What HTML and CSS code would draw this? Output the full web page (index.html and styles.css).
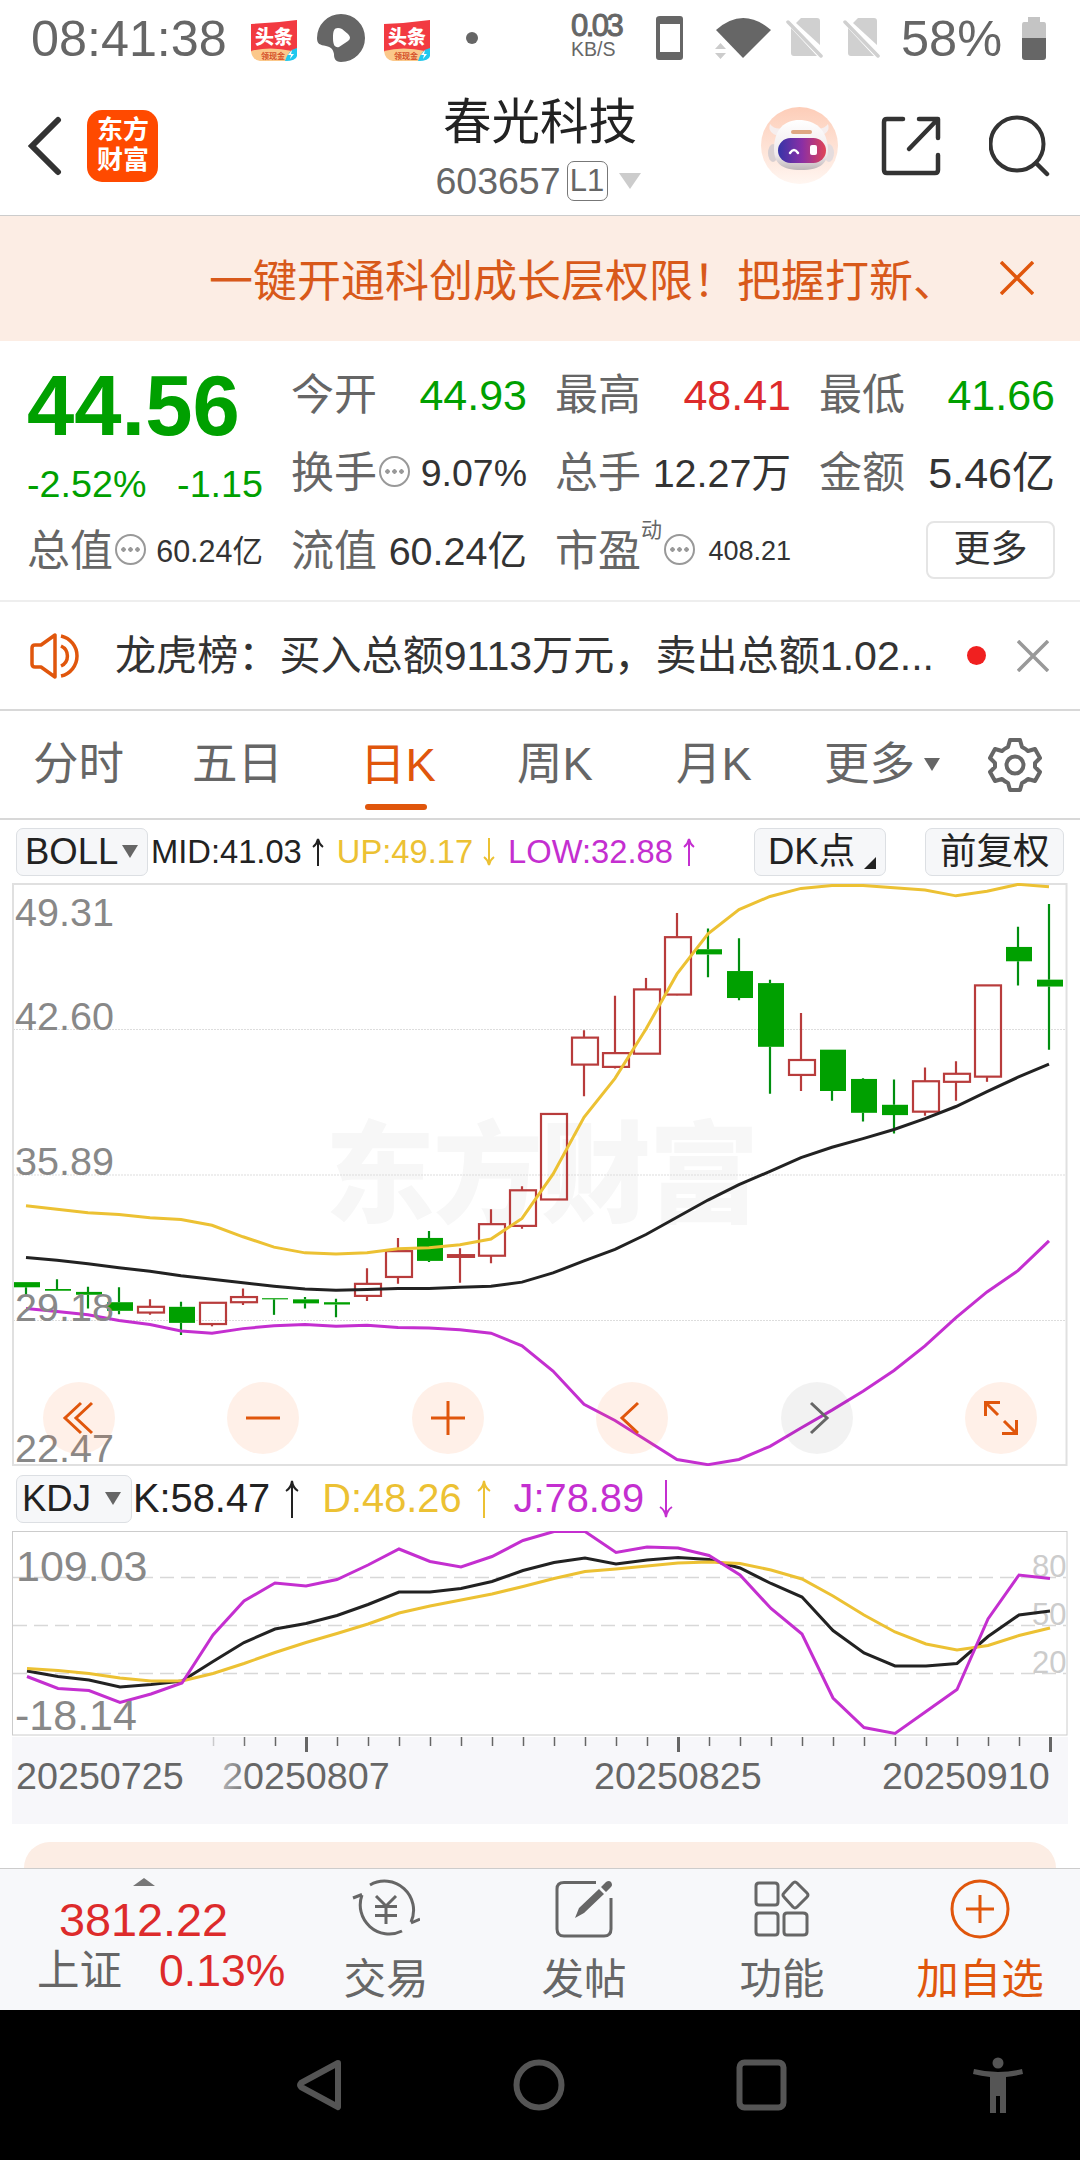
FILE: index.html
```
<!DOCTYPE html>
<html lang="zh-CN">

<head>
  <meta charset="UTF-8">
  <title>春光科技 603657</title>
  <link rel="stylesheet" href="styles.css">
</head>

<body>
  <!-- status bar -->
  <div class="status">
    <span class="time">08:41:38</span>
    <svg class="toutiao" width="48" height="42" viewBox="0 0 48 42">
      <path fill="#f23a41" d="M1 4Q25 3 47 0V32H1z" />
      <path fill="#fbc88a" d="M1 31Q20 26 42 31L38 41H10Q2 40 1 31z" />
      <path fill="#1fc8ee" d="M47 28V36Q46 41 35 41Q38 30 47 28z" />
      <path fill="#fff" d="M42 30l-4 5h3l-1 4 4-5h-3z" />
      <text class="tt-name" x="5" y="24">头条</text>
      <text class="tt-cash" x="11" y="39">领现金</text>
    </svg>
    <svg class="video" width="48" height="48" viewBox="0 0 48 48">
      <path fill="#666" fill-rule="evenodd" d="M24 0A24 24 0 1 1 24 48C18 48 17 44 17 40C16 35 14 33 9 32C3 31 0 30 0 24A24 24 0 0 1 24 0zM21 14C17 14 16 17 16 24C16 31 18 34 22 33L31 27Q35 24 31 20L25 15Q23 14 21 14z" />
    </svg>
    <svg class="toutiao" width="48" height="42" viewBox="0 0 48 42">
      <path fill="#f23a41" d="M1 4Q25 3 47 0V32H1z" />
      <path fill="#fbc88a" d="M1 31Q20 26 42 31L38 41H10Q2 40 1 31z" />
      <path fill="#1fc8ee" d="M47 28V36Q46 41 35 41Q38 30 47 28z" />
      <path fill="#fff" d="M42 30l-4 5h3l-1 4 4-5h-3z" />
      <text class="tt-name" x="5" y="24">头条</text>
      <text class="tt-cash" x="11" y="39">领现金</text>
    </svg>
    <i class="more-dot"></i>
    <div class="speed"><b>0.03</b><span>KB/S</span></div>
    <svg class="phone" width="28" height="44" viewBox="0 0 28 44">
      <path fill="#666" fill-rule="evenodd" d="M4 0H24Q27 0 27 3V41Q27 44 24 44H3Q0 44 0 41V3Q0 0 4 0zM4 8V36H24V8z" />
    </svg>
    <svg class="wifi" width="58" height="44" viewBox="0 0 58 44">
      <path fill="#666" d="M2 14Q29 -10 57 14L29 42z" />
      <path fill="#ccc" d="M1 33L6.500 27L12 33zM1 37L6.500 43L12 37z" />
    </svg>
    <svg class="sim" width="38" height="42" viewBox="0 0 38 42">
      <path fill="#d0d0d0" d="M15 1H31Q34 1 34 4V28L10 6zM5 11L31 39H8Q5 39 5 36z" />
      <path stroke="#d0d0d0" stroke-width="3.500" stroke-linecap="round" d="M2 5L35 39" />
    </svg>
    <svg class="sim" width="38" height="42" viewBox="0 0 38 42">
      <path fill="#d0d0d0" d="M15 1H31Q34 1 34 4V28L10 6zM5 11L31 39H8Q5 39 5 36z" />
      <path stroke="#d0d0d0" stroke-width="3.500" stroke-linecap="round" d="M2 5L35 39" />
    </svg>
    <span class="percent">58%</span>
    <svg class="battery" width="24" height="43" viewBox="0 0 24 43">
      <path fill="#c4c4c4" d="M6 0H18V5H22Q24 5 24 8V22H0V8Q0 5 2 5H6z" />
      <path fill="#666" d="M0 21H24V40Q24 43 21 43H3Q0 43 0 40z" />
    </svg>
  </div>

  <!-- header -->
  <div class="header">
    <div class="left">
      <svg width="35" height="60" viewBox="0 0 35 60">
        <path fill="none" stroke="#333" stroke-width="6" stroke-linecap="round" d="M30 4L4 30L30 56" />
      </svg>
      <div class="logo">东方<br>财富</div>
    </div>
    <div class="name">
      <h1>春光科技</h1>
      <p class="code"><span>603657</span><em>L1</em><i></i></p>
    </div>
    <div class="right">
      <svg width="77" height="77" viewBox="0 0 77 77">
        <defs>
          <linearGradient id="face" x1="0" y1="0" x2="0" y2="1">
            <stop offset="0" stop-color="#fdcdb8" />
            <stop offset="1" stop-color="#fff6f1" />
          </linearGradient>
          <linearGradient id="visor">
            <stop offset="0" stop-color="#3534a8" />
            <stop offset=".5" stop-color="#8a2fa5" />
            <stop offset="1" stop-color="#e04456" />
          </linearGradient>
          <linearGradient id="shell" x1="0" y1="0" x2="0" y2="1">
            <stop offset="0" stop-color="#fff" />
            <stop offset=".7" stop-color="#efe9ea" />
            <stop offset="1" stop-color="#bdb5b8" />
          </linearGradient>
        </defs>
        <circle cx="38.500" cy="38.500" r="38.500" fill="url(#face)" />
        <path fill="#f6eeee" d="M18 29Q6 26 9 17Q14 23 21 21zM58 29Q70 26 67 17Q62 23 55 21z" />
        <ellipse cx="12" cy="46" rx="5" ry="9" fill="#d8cfd1" />
        <ellipse cx="68" cy="46" rx="5" ry="9" fill="#e4dcde" />
        <path fill="url(#shell)" d="M13 42C13 22 24 13 38 13C54 13 66 22 67 42C67 56 60 63 40 63C20 63 13 56 13 42z" />
        <rect x="30" y="23" width="21" height="4" rx="2" fill="#dfa883" />
        <rect x="17" y="31" width="48" height="25" rx="12.500" fill="url(#visor)" />
        <path fill="none" stroke="#fff" stroke-width="2.500" stroke-linecap="round" d="M29 46Q33 40 37 46" />
        <rect x="49" y="38" width="7" height="10" rx="2" fill="#fff" />
      </svg>
      <svg width="60" height="60" viewBox="0 0 60 60">
        <path fill="none" stroke="#333" stroke-width="4.500" stroke-linecap="round" stroke-linejoin="round" d="M22 3H6Q3 3 3 6V54Q3 57 6 57H54Q57 57 57 54V39M38 3H57V22M56 4L28 33" />
      </svg>
      <svg width="62" height="62" viewBox="0 0 62 62">
        <circle cx="28" cy="29" r="26.500" fill="none" stroke="#333" stroke-width="4" />
        <path stroke="#333" stroke-width="4.500" stroke-linecap="round" d="M47 48L58 59" />
      </svg>
    </div>
  </div>

  <!-- promo banner -->
  <div class="banner">
    <p>一键开通科创成长层权限！把握打新、</p>
    <svg width="34" height="34" viewBox="0 0 34 34">
      <path stroke="#e0560c" stroke-width="3.500" d="M1 1L33 33M33 1L1 33" />
    </svg>
  </div>

  <!-- quote -->
  <div class="quote">
    <div class="price">
      <strong>44.56</strong>
      <p><span>-2.52%</span><span>-1.15</span></p>
    </div>
    <div class="cell"><span>今开</span><b class="green">44.93</b></div>
    <div class="cell"><span>最高</span><b class="red">48.41</b></div>
    <div class="cell"><span>最低</span><b class="green">41.66</b></div>
    <div class="cell"><span>换手</span><i class="tip"></i><b class="s37">9.07%</b></div>
    <div class="cell"><span>总手</span><b class="s39">12.27万</b></div>
    <div class="cell"><span>金额</span><b>5.46亿</b></div>
    <div class="cell"><span>总值</span><i class="tip"></i><b class="s30">60.24亿</b></div>
    <div class="cell"><span>流值</span><b class="s39">60.24亿</b></div>
    <div class="cell"><span>市盈</span><sup>动</sup><i class="tip"></i><b class="s26">408.21</b></div>
    <div class="cell"><button class="more">更多</button></div>
  </div>

  <!-- news -->
  <div class="news">
    <svg width="54" height="48" viewBox="0 0 54 48">
      <path fill="none" stroke="#e0560c" stroke-width="3.500" stroke-linejoin="round" d="M2 16Q2 13 5 13H11L25 3V45L11 35H5Q2 35 2 32zM31 14A11 11 0 0 1 31 34M31 4A20.500 20.500 0 0 1 31 44" />
    </svg>
    <p>龙虎榜：买入总额9113万元，卖出总额1.02...</p>
    <i class="dot"></i>
    <svg width="32" height="32" viewBox="0 0 32 32">
      <path stroke="#999" stroke-width="3.500" d="M1 1L31 31M31 1L1 31" />
    </svg>
  </div>

  <!-- period tabs -->
  <div class="tabs">
    <span>分时</span>
    <span>五日</span>
    <span class="active">日K</span>
    <span>周K</span>
    <span>月K</span>
    <span class="last">更多<i class="arrow"></i></span>
    <svg width="54" height="54" viewBox="0 0 54 54">
      <path fill="none" stroke="#666" stroke-width="4" stroke-linejoin="round" d="M22 2H32L34 9Q38 11 40 13L47 11L52 20L47 25V29L52 34L47 43L40 41Q38 43 34 45L32 52H22L20 45Q16 43 14 41L7 43L2 34L7 29V25L2 20L7 11L14 13Q16 11 20 9z" />
      <circle cx="27" cy="27" r="8.500" fill="none" stroke="#666" stroke-width="4" />
    </svg>
  </div>

  <!-- BOLL -->
  <div class="indicator boll">
    <span class="select">BOLL<i class="arrow"></i></span>
    <span class="value black">MID:41.03<svg width="14" height="28" viewBox="0 0 14 28"><path d="M7 28V2M2 9Q6 6 7 1Q8 6 12 9" /></svg></span>
    <span class="value yellow">UP:49.17<svg width="14" height="28" viewBox="0 0 14 28"><path d="M7 0V26M2 19Q6 22 7 27Q8 22 12 19" /></svg></span>
    <span class="value purple">LOW:32.88<svg width="14" height="28" viewBox="0 0 14 28"><path d="M7 28V2M2 9Q6 6 7 1Q8 6 12 9" /></svg></span>
    <span class="btn dk">DK点<i></i></span>
    <span class="btn">前复权</span>
  </div>

  <div class="chart">
    <svg width="1056" height="583" viewBox="0 0 1056 583">
      <text class="watermark" x="313" y="331" textLength="434">东方财富</text>
      <path class="grid" d="M1 146.500H1054M1 292H1054M1 437.500H1054" />
      <rect class="frame" x="1" y="1" width="1053.500" height="581" />
      <g id="candles"></g>
      <g class="lines" id="boll"></g>
      <g class="axis">
        <text x="3" y="43">49.31</text>
        <text x="3" y="147">42.60</text>
        <text x="3" y="292">35.89</text>
        <text x="3" y="438">29.18</text>
        <text x="3" y="579">22.47</text>
      </g>
    </svg>
    <div class="tools">
      <button><svg width="36" height="36" viewBox="0 0 36 36"><path d="M20 3L4 18L20 33M31 3L15 18L31 33" /></svg></button>
      <button><svg width="36" height="36" viewBox="0 0 36 36"><path d="M1 18H35" /></svg></button>
      <button><svg width="36" height="36" viewBox="0 0 36 36"><path d="M1 18H35M18 1V35" /></svg></button>
      <button><svg width="36" height="36" viewBox="0 0 36 36"><path d="M24 3L8 18L24 33" /></svg></button>
      <button class="off"><svg width="36" height="36" viewBox="0 0 36 36"><path d="M12 3L28 18L12 33" /></svg></button>
      <button><svg width="36" height="36" viewBox="0 0 36 36"><path d="M2.500 16V2.500H17M3 3L15 15M19 33.500H33.500V20M33 33L21 21" /></svg></button>
    </div>
  </div>

  <!-- KDJ -->
  <div class="indicator kdj">
    <span class="select">KDJ<i class="arrow"></i></span>
    <span class="value black">K:58.47<svg width="16" height="38" viewBox="0 0 16 38"><path d="M8 38V3M2 11Q7 8 8 1Q9 8 14 11" /></svg></span>
    <span class="value yellow">D:48.26<svg width="16" height="38" viewBox="0 0 16 38"><path d="M8 38V3M2 11Q7 8 8 1Q9 8 14 11" /></svg></span>
    <span class="value purple">J:78.89<svg width="16" height="38" viewBox="0 0 16 38"><path d="M8 0V35M2 27Q7 30 8 37Q9 30 14 27" /></svg></span>
  </div>

  <div class="chart">
    <svg width="1056" height="205" viewBox="0 0 1056 205">
      <path class="dash" d="M1 46.500H1054M1 94.500H1054M1 142.500H1054" />
      <rect class="frame thin" x=".5" y=".5" width="1054.500" height="203.500" />
      <g class="levels">
        <text x="1020" y="46">80</text>
        <text x="1020" y="94">50</text>
        <text x="1020" y="142">20</text>
      </g>
      <g class="lines" id="kdj"></g>
      <g class="axis big">
        <text x="4" y="50">109.03</text>
        <text x="3" y="198.500">-18.14</text>
      </g>
    </svg>
  </div>

  <div class="dates">
    <svg width="1056" height="87" viewBox="0 0 1056 87">
      <defs>
        <linearGradient id="fade">
          <stop offset="0" stop-color="#f7f7fa" />
          <stop offset=".4" stop-color="#f7f7fa" stop-opacity=".7" />
          <stop offset="1" stop-color="#f7f7fa" stop-opacity="0" />
        </linearGradient>
      </defs>
      <g id="ticks"></g>
      <text x="210" y="52">20250807</text>
      <rect x="176" y="0" width="62" height="87" fill="url(#fade)" />
      <text x="4" y="52">20250725</text>
      <text x="582" y="52">20250825</text>
      <text x="870" y="52">20250910</text>
    </svg>
  </div>

  <div class="card"></div>

  <!-- bottom bar -->
  <div class="bottom">
    <div class="index">
      <i></i>
      <b>3812.22</b>
      <p><span>上证</span><em>0.13%</em></p>
    </div>
    <div class="item">
      <svg width="68" height="60" viewBox="0 0 68 60">
        <path d="M18 6A29 29 0 0 1 59 43M50 52A29 29 0 0 1 10 16M1 19L10 15.500M68 40L59 44M24 17L34 27L44 17M34 27V45M23 27.500H45M23 36.500H45" />
      </svg>
      <span>交易</span>
    </div>
    <div class="item">
      <svg width="58" height="60" viewBox="0 0 58 60">
        <path d="M41 3.500H9Q2 3.500 2 10V50Q2 57 9 57H49Q56 57 56 50V19" />
        <path class="solid" d="M20 39L24 29L44 10L49 15L29 34zM46 8L51 3Q54 1 56 3Q58 6 56 8L51 13z" />
      </svg>
      <span>发帖</span>
    </div>
    <div class="item">
      <svg width="56" height="60" viewBox="0 0 56 60">
        <path d="M5 4H21Q24 4 24 7V23Q24 26 21 26H5Q2 26 2 23V7Q2 4 5 4zM5 34H21Q24 34 24 37V53Q24 56 21 56H5Q2 56 2 53V37Q2 34 5 34zM33 34H49Q53 34 53 37V53Q53 56 49 56H33Q30 56 30 53V37Q30 34 33 34zM39 4Q41 2 43 4L53 14Q55 16 53 18L43 28Q41 30 39 28L30 18Q28 16 30 14z" />
      </svg>
      <span>功能</span>
    </div>
    <div class="item add">
      <svg width="60" height="60" viewBox="0 0 60 60">
        <circle cx="30" cy="30" r="28" />
        <path d="M30 16V44M16 30H44" />
      </svg>
      <span>加自选</span>
    </div>
  </div>

  <!-- android navigation -->
  <div class="nav">
    <svg width="50" height="56" viewBox="0 0 50 56">
      <path d="M43 6L6 26Q4 28 6 30L43 50z" />
    </svg>
    <svg width="52" height="52" viewBox="0 0 52 52">
      <circle cx="26" cy="26" r="22.500" />
    </svg>
    <svg width="52" height="52" viewBox="0 0 52 52">
      <rect x="4.500" y="3.500" width="44" height="45" rx="5" />
    </svg>
    <svg class="person" width="50" height="57" viewBox="0 0 50 57">
      <circle cx="25" cy="6" r="5.500" />
      <path d="M1 12Q25 18 49 12L50 17Q42 19 33 20V56H27V39H23V56H17V20Q8 19 0 17z" />
    </svg>
  </div>

  <script>
    var step = 31;
    var plotHeight = 582;
    var dataHeight = 507;

    // [rising, high, body top, body bottom, low]
    var candles = [
      [0, 347, 347, 351.5, 358.5], [0, 344.5, 353, 354.5, 354.5], [0, 351, 355.5, 358, 370],
      [0, 351.5, 364.5, 372, 375], [1, 362, 368.5, 373.5, 375.5], [0, 364, 368.5, 382.5, 393],
      [1, 365, 365, 383.5, 385.5], [1, 352.5, 360, 364.5, 367], [0, 361, 361, 362, 375.5],
      [0, 360, 362, 365.5, 370], [0, 361.5, 364.5, 366.5, 377.5], [1, 335, 348.5, 359, 363.5],
      [1, 308.5, 320, 342.5, 348.5], [0, 302.5, 308.5, 328.5, 329.5], [1, 317.5, 323.5, 325, 347.5],
      [1, 283.5, 296.5, 324, 330.5], [1, 263.5, 267, 298, 300.5], [1, 200.5, 200.5, 275, 275],
      [1, 127.5, 134, 157.5, 185], [1, 97.5, 147.5, 159.5, 161], [1, 82, 92, 148, 148],
      [1, 25.5, 46.5, 96.5, 97], [0, 39, 57, 61.5, 81.5], [0, 47.5, 76, 99.5, 101.5],
      [0, 83.5, 86.5, 142, 183], [1, 112.5, 153.5, 166.5, 180.5], [0, 144.5, 144.5, 180.5, 189],
      [0, 169.5, 170, 199.5, 207], [0, 170.5, 192.5, 201.5, 217.5], [1, 160, 172, 198.5, 202],
      [1, 154.5, 165.5, 172.5, 189], [1, 88.5, 88.5, 168, 172.5], [0, 37.5, 55, 67.5, 88.5],
      [0, 17.5, 83.5, 89.5, 144.5]
    ];

    var boll = {
      black: [325.5, 328, 331, 334.5, 337.5, 341.5, 344.5, 347.5, 350.5, 353, 354, 353.5, 352.5, 352.5, 351.5, 350.5, 347, 339, 328.5, 318.5, 305.5, 290.5, 275.5, 262, 250.5, 238.5, 229.5, 222, 214, 204.5, 194, 181, 168.5, 157],
      purple: [370, 372.5, 375.5, 380.5, 384, 389.5, 391.5, 387.5, 385, 384, 385.5, 384.5, 386.5, 387, 388.5, 391.5, 402.5, 424.5, 453.5, 467.5, 484.5, 501.5, 506, 501.5, 490, 474, 458.5, 442, 424, 402.5, 378, 355.5, 337, 311],
      yellow: [280.5, 283.5, 286.5, 288, 291, 292.5, 297.5, 307.5, 316.5, 321.5, 322.5, 321.5, 318, 317, 314.5, 309.5, 291.5, 253, 203.5, 169.5, 126.5, 78.5, 43.5, 22.5, 11, 4, 1.5, 1.5, 3.5, 5.5, 10.5, 6.5, 0.5, 2.5]
    };

    var kdj = {
      black: [140, 145.5, 149, 156, 153.5, 150, 130.5, 111.5, 98, 92.5, 84.5, 73.5, 61, 61, 57.5, 50.5, 39.5, 31.5, 27, 33, 29, 26.5, 28.5, 37, 52.5, 66, 99.5, 122, 135, 135, 132.5, 105.5, 84, 80],
      yellow: [137.5, 139.5, 142.5, 147, 150, 150, 142.5, 132.5, 121.5, 111.5, 102.5, 93, 82, 75, 69, 63, 55.5, 47.5, 40.5, 38, 35, 32, 31, 32.5, 39, 48, 65, 84, 101, 113, 119, 114.5, 104.5, 97],
      purple: [145.5, 157.5, 159.5, 171.5, 163, 152, 104, 70, 52, 55, 48.5, 34, 18, 30.5, 36, 25.5, 9.5, 0.5, 0.5, 21.5, 16, 17, 24.5, 44, 77.5, 103, 167, 196.5, 202.5, 180.5, 158.5, 88, 44, 47.5]
    };

    function toY(value) {
      return value * plotHeight / dataHeight + 0.8;
    }

    function drawCandles() {
      var html = "";
      candles.forEach(function (c, i) {
        var x = 14 + i * step;
        var cls = c[0] ? "rise" : "fall";
        var y = c.slice(1).map(toY);
        html += '<path class="' + cls + '" d="M' + x + ' ' + y[0] + 'V' + y[1] + 'M' + x + ' ' + y[2] + 'V' + y[3] + '"/>';
        html += '<rect class="' + cls + ' body" x="' + (x - 12) + '" y="' + y[1] + '" width="26" height="' + (y[2] - y[1]) + '"/>';
      });
      document.getElementById("candles").innerHTML = html;
    }

    function drawLines(id, data, start) {
      var html = "";
      for (var color in data) {
        var points = data[color].map(function (y, i) {
          return (start + i * step) + "," + (id == "boll" ? toY(y) : y);
        });
        html += '<polyline class="' + color + '" points="' + points.join(" ") + '"/>';
      }
      document.getElementById(id).innerHTML = html;
    }

    function drawTicks() {
      var html = "";
      for (var i = 6; i < 34; i++) {
        var major = i == 9 || i == 21 || i == 33;
        html += '<path class="' + (major ? "major" : "minor") + '" d="M' + (15.5 + i * step) + ' 0v' + (major ? 15 : 9) + '"/>';
      }
      document.getElementById("ticks").innerHTML = html;
    }

    drawCandles();
    drawLines("boll", boll, 14);
    drawLines("kdj", kdj, 15);
    drawTicks();
  </script>
</body>

</html>
```
FILE: styles.css
```
* {
  margin: 0;
  padding: 0;
  box-sizing: border-box;
}

body {
  width: 1080px;
  height: 2160px;
  overflow: hidden;
  background: #fff;
  color: #333;
  font-family: "Liberation Sans", "Noto Sans CJK SC", sans-serif;
}

svg {
  display: block;
  flex: none;
}

i,
em {
  font-style: normal;
}

b {
  font-weight: 400;
}

button {
  font-family: inherit;
}

.green {
  color: #00a000;
}

.red {
  color: #dd2b2b;
}

/* status bar */
.status {
  display: flex;
  align-items: center;
  height: 76px;
  padding-left: 31px;
  color: #666;
}

.time {
  width: 219px;
  font-size: 50.300px;
  white-space: nowrap;
}

.toutiao {
  margin-top: 6px;
}

.tt-name {
  fill: #fff;
  font-size: 19px;
  font-weight: 900;
}

.tt-cash {
  fill: #d4502a;
  font-size: 8px;
  font-weight: 700;
}

.video {
  margin: 0 18px 0 19px;
}

.more-dot {
  width: 12px;
  height: 12px;
  margin-left: 35px;
  border-radius: 50%;
  background: #666;
}

.speed {
  display: flex;
  flex-direction: column;
  width: 60px;
  margin-left: 93px;
}

.speed b {
  font-size: 31px;
  line-height: 22px;
  letter-spacing: -2.500px;
  -webkit-text-stroke: 1px #666;
}

.speed span {
  font-size: 19.500px;
  line-height: 25px;
}

.phone {
  margin-left: 25px;
}

.wifi {
  margin-left: 30px;
}

.sim {
  margin-left: 14px;
}

.sim + .sim {
  margin-left: 19px;
}

.percent {
  width: 118px;
  margin-left: 20px;
  font-size: 50.500px;
}

.battery {
  margin-left: 3px;
}

/* header */
.header {
  display: grid;
  grid-template-columns: 330px 1fr 330px;
  align-items: center;
  height: 140px;
  border-bottom: 1px solid #ccc;
}

.left {
  display: flex;
  align-items: center;
  padding-left: 28px;
}

.logo {
  width: 71px;
  height: 72px;
  margin-left: 24px;
  padding: 5px 0 0 10px;
  border-radius: 15px;
  background: #ff4a00;
  color: #fff;
  font-size: 26px;
  font-weight: 700;
  line-height: 30px;
}

.name {
  align-self: start;
  padding-top: 14px;
  text-align: center;
}

.name h1 {
  color: #222;
  font-size: 48.500px;
  font-weight: 400;
  line-height: 64px;
}

.code {
  display: flex;
  align-items: center;
  justify-content: center;
  height: 54px;
  margin-left: -4px;
  color: #666;
  font-size: 37.500px;
}

.code em {
  width: 41px;
  height: 40px;
  margin-left: 6px;
  border: 1.500px solid #777;
  border-radius: 7px;
  font-size: 31px;
  line-height: 37px;
}

.code i {
  margin-left: 11px;
  border: 11px solid transparent;
  border-top: 16px solid #ccc;
  border-bottom: 0;
}

.right {
  display: flex;
  align-items: center;
  justify-content: flex-end;
  gap: 43px;
  padding-right: 29px;
}

.right svg:last-child {
  margin-left: 5px;
}

/* promo banner */
.banner {
  display: flex;
  align-items: center;
  justify-content: space-between;
  height: 125px;
  padding: 0 46px 2px 209px;
  background: #fcede4;
  color: #d8591a;
  font-size: 44px;
}

/* quote */
.quote {
  display: grid;
  grid-template-columns: repeat(4, 236px);
  grid-template-rows: 78px 78px 78px;
  column-gap: 28px;
  height: 261px;
  padding: 15px 27px 0;
  border-bottom: 2px solid #eee;
}

.price {
  grid-row: span 2;
  color: #00a000;
}

.price strong {
  display: block;
  padding-top: 3px;
  font-size: 85px;
  font-weight: 700;
  line-height: 94px;
}

.price p {
  display: flex;
  justify-content: space-between;
  font-size: 37.700px;
  line-height: 62px;
}

.cell {
  display: flex;
  align-items: center;
  white-space: nowrap;
}

.cell span {
  color: #666;
  font-size: 43px;
  line-height: 60px;
}

.cell b {
  margin-left: auto;
  font-size: 43px;
  line-height: 60px;
}

.cell .s39 {
  font-size: 39.500px;
}

.cell .s37 {
  font-size: 37.500px;
}

.cell .s30 {
  font-size: 30.500px;
}

.cell .s26 {
  font-size: 27px;
}

.cell sup {
  align-self: flex-start;
  margin-top: 3px;
  color: #666;
  font-size: 21px;
  line-height: 30px;
}

.tip {
  width: 31px;
  height: 31px;
  margin: -4px 0 0 2px;
  border: 2px solid #999;
  border-radius: 50%;
  background: radial-gradient(circle, #999 2px, transparent 2.500px) center / 7px 7px no-repeat, radial-gradient(circle, #999 2px, transparent 2.500px) 3px center / 7px 7px no-repeat, radial-gradient(circle, #999 2px, transparent 2.500px) 17px center / 7px 7px no-repeat;
}

.more {
  width: 129px;
  height: 58px;
  margin: -2px 0 0 auto;
  border: 2px solid #e5e5e5;
  border-radius: 8px;
  background: #fff;
  color: #333;
  font-size: 37px;
  line-height: 54px;
}

/* news */
.news {
  display: flex;
  align-items: center;
  height: 109px;
  padding: 0 31px 0 30px;
  border-bottom: 2px solid #d8d8d8;
}

.news p {
  flex: 1;
  margin-left: 31px;
  font-size: 41.100px;
  line-height: 60px;
  white-space: nowrap;
}

.news .dot {
  width: 19px;
  height: 19px;
  margin-right: 31px;
  border-radius: 50%;
  background: #f02020;
}

/* period tabs */
.arrow {
  border: 8px solid transparent;
  border-top: 13px solid #666;
  border-bottom: 0;
}

.tabs {
  display: flex;
  align-items: center;
  height: 109px;
  padding-left: 33px;
  border-bottom: 2px solid #d8d8d8;
  color: #666;
  font-size: 45.500px;
}

.tabs span {
  width: 159px;
  line-height: 109px;
}

.tabs .active {
  display: flex;
  flex-direction: column;
  width: 155px;
  height: 107px;
  margin-left: 9px;
  color: #e0560c;
}

.tabs .active::after {
  content: "";
  width: 62px;
  height: 6px;
  margin: -16px 0 0 5px;
  border-radius: 3px;
  background: #e0560c;
}

.tabs .active + span {
  margin-left: 2px;
}

.tabs .last {
  display: flex;
  align-items: center;
  width: 166px;
  margin-left: -11px;
}

.tabs .arrow {
  margin-left: 9px;
}

.tabs svg {
  margin-left: -2px;
}

/* indicator rows */
.indicator {
  display: flex;
  align-items: center;
}

.black {
  color: #222;
  stroke: #222;
}

.yellow {
  color: #ecc133;
  stroke: #ecc133;
}

.purple {
  color: #c42fd0;
  stroke: #c42fd0;
}

.select,
.btn {
  display: flex;
  align-items: center;
  height: 48px;
  border: 1px solid #dcdfe3;
  border-radius: 7px;
  background: #f6f7f9;
  color: #222;
  font-size: 36.500px;
  line-height: 46px;
  white-space: nowrap;
}

.value {
  display: flex;
  align-items: center;
}

.value path {
  fill: none;
  stroke-width: 2;
}

.boll {
  height: 63px;
  padding: 0 16px;
}

.boll .select {
  width: 132px;
  padding-left: 8px;
}

.boll .select .arrow {
  margin-left: 4px;
}

.boll .value {
  margin-left: 3px;
  font-size: 32.700px;
}

.boll .value svg {
  margin-left: 9px;
}

.boll .value + .value {
  margin-left: 12px;
}

.boll .btn {
  width: 139px;
  padding-left: 14px;
}

.boll .dk {
  width: 132px;
  margin: 0 39px 0 auto;
  padding-left: 13px;
}

.dk i {
  align-self: flex-end;
  margin: 0 0 6px 9px;
  border-bottom: 12px solid #222;
  border-left: 12px solid transparent;
}

.kdj {
  height: 65px;
  padding: 0 16px;
}

.kdj .select {
  width: 116px;
  padding-left: 5px;
  font-size: 36.500px;
}

.kdj .select .arrow {
  margin-left: 14px;
}

.kdj .value {
  margin-left: 1px;
  font-size: 39.800px;
}

.kdj .value svg {
  margin-left: 14px;
}

.kdj .value + .value {
  margin-left: 22px;
}

/* charts */
.chart {
  position: relative;
  margin-left: 12px;
}

.frame {
  fill: none;
  stroke: #e0e0e0;
  stroke-width: 2;
}

.frame.thin {
  stroke: #ccc;
  stroke-width: 1;
}

.grid {
  stroke: #ddd;
  stroke-width: 1;
  stroke-dasharray: 2 1;
}

.dash {
  stroke: #d8d8d8;
  stroke-width: 1.500;
  stroke-dasharray: 14 7;
}

.watermark {
  fill: #f7f7f7;
  font-size: 110px;
  font-weight: 900;
}

.rise,
.fall {
  stroke: #b83c3c;
  stroke-width: 2.200;
}

.body {
  fill: none;
}

.fall {
  stroke: #008f10;
}

.fall.body {
  fill: #00a000;
  stroke: none;
}

.lines {
  fill: none;
  stroke-width: 3;
}

.axis {
  fill: #888;
  font-size: 39.500px;
}

.axis.big {
  font-size: 43px;
}

.levels {
  fill: #ccc;
  font-size: 31px;
}

.tools {
  position: absolute;
  left: 31px;
  bottom: 12px;
  display: flex;
  justify-content: space-between;
  width: 994px;
}

.tools button {
  display: flex;
  align-items: center;
  justify-content: center;
  width: 72px;
  height: 72px;
  border: 0;
  border-radius: 50%;
  background: rgba(255, 107, 30, .1);
}

.tools path {
  fill: none;
  stroke: #e0560c;
  stroke-width: 3;
}

.tools .off {
  background: rgba(0, 0, 0, .05);
}

.tools .off path {
  stroke: #666;
}

.dates {
  width: 1056px;
  margin: 1px 0 0 12px;
  background: #f7f7fa;
}

.dates text {
  fill: #666;
  font-size: 37.700px;
}

.minor {
  stroke: #666;
  stroke-width: 1.500;
}

.major {
  stroke: #666;
  stroke-width: 3;
}

.card {
  height: 26px;
  margin: 18px 24px 0;
  border-radius: 40px 40px 0 0;
  background: #fcede4;
}

/* bottom bar */
.bottom {
  display: flex;
  height: 142px;
  border-top: 1px solid #ccc;
  background: #f7f8fa;
  color: #666;
}

.index {
  width: 287px;
}

.index i {
  display: block;
  width: 22px;
  margin: 9px 0 0 133px;
  border: 11px solid transparent;
  border-top: 0;
  border-bottom: 8px solid #777;
}

.index b {
  display: block;
  padding-top: 4px;
  color: #dd2b2b;
  font-size: 46.800px;
  line-height: 60px;
  text-align: center;
}

.index p {
  display: flex;
  padding-left: 37px;
  font-size: 42.500px;
  line-height: 42px;
}

.index em {
  margin-left: 37px;
  color: #dd2b2b;
  font-size: 44.500px;
}

.item {
  display: flex;
  flex-direction: column;
  align-items: center;
  width: 198px;
  padding-top: 10px;
  font-size: 42.500px;
}

.item span {
  margin-top: 11px;
  line-height: 60px;
}

.item svg {
  fill: none;
  stroke: #666;
  stroke-width: 3;
}

.item .solid {
  fill: #666;
  stroke: none;
}

.add {
  color: #e0560c;
}

.add svg {
  stroke: #e0560c;
}

/* android navigation */
.nav {
  display: flex;
  align-items: center;
  height: 150px;
  padding-left: 295px;
  background: #000;
}

.nav svg {
  margin-right: 168px;
  fill: none;
  stroke: #555;
  stroke-width: 6;
  stroke-linejoin: round;
}

.nav svg + svg {
  margin-right: 170px;
}

.nav svg + svg + svg {
  margin-right: 186px;
}

.nav .person {
  fill: #555;
  stroke: none;
}
```
